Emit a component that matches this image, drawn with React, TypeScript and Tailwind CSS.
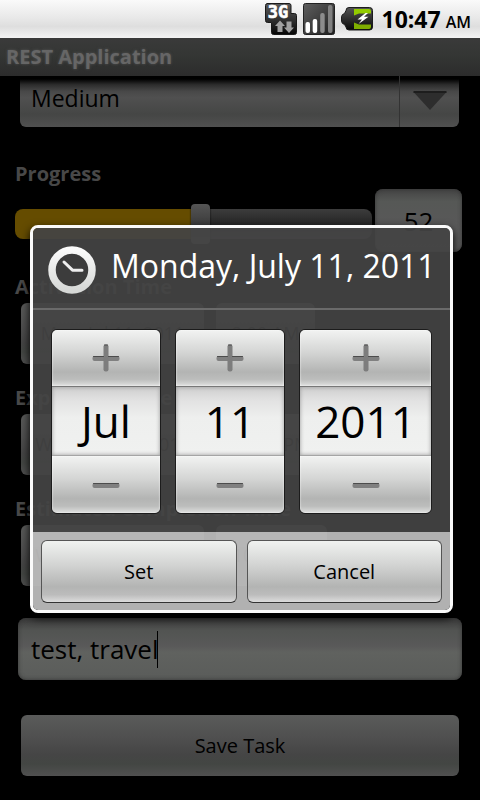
import React from "react";

const FONT = "font-['Open_Sans','Noto_Sans',sans-serif]";

function NetworkIcon() {
  return (
    <svg width="32" height="32" viewBox="0 0 32 32" role="img" aria-label="3G data">
      <defs>
        <linearGradient id="net" x1="0" y1="0" x2="0" y2="1">
          <stop offset="0" stopColor="#5a5a5a" />
          <stop offset="0.6" stopColor="#2a2a2a" />
          <stop offset="1" stopColor="#050505" />
        </linearGradient>
      </defs>
      <path
        d="M2 0.5H24a2 2 0 0 1 2 2V10.500h3.500a2 2 0 0 1 2 2V29.500a2 2 0 0 1 -2 2H8.500a2 2 0 0 1 -2 -2V19.500H2.500a2 2 0 0 1 -2 -2V2.500a2 2 0 0 1 2 -2z"
        fill="url(#net)"
        stroke="#1a1a1a"
      />
      <text x="13" y="15" textAnchor="middle" fontFamily="DejaVu Sans Mono, monospace" fontWeight="700" fontSize="17" fill="#fff" stroke="#fff" strokeWidth="0.6">
        3G
      </text>
      <path d="M15 17.500l5 5.500h-2.500v6h-5v-6H10z" fill="#a0a0a0" />
      <path d="M24 30l5-5.500h-2.500v-6h-5v6H19z" fill="#a0a0a0" />
    </svg>
  );
}

function SignalIcon() {
  return (
    <svg width="32" height="32" viewBox="0 0 32 32" role="img" aria-label="Signal strength">
      <defs>
        <linearGradient id="sig" x1="0" y1="0" x2="1" y2="1">
          <stop offset="0" stopColor="#5f5f5f" />
          <stop offset="0.5" stopColor="#3f3f3f" />
          <stop offset="1" stopColor="#1e1e1e" />
        </linearGradient>
      </defs>
      <rect x="0.5" y="0.5" width="31" height="31" rx="2" fill="url(#sig)" stroke="#222" />
      <rect x="2.500" y="19" width="4.500" height="11" rx="2" fill="#fff" />
      <rect x="9.700" y="16" width="4.500" height="14" rx="2" fill="#fff" />
      <rect x="17.200" y="10" width="4.500" height="20" rx="2" fill="#8c8c8c" />
      <rect x="25" y="2" width="4.500" height="28" rx="2" fill="#808080" />
    </svg>
  );
}

function BatteryIcon() {
  return (
    <svg width="32" height="24" viewBox="0 0 32 24" role="img" aria-label="Battery charging">
      <defs>
        <linearGradient id="bat" x1="0" y1="0" x2="0" y2="1">
          <stop offset="0" stopColor="#555" />
          <stop offset="1" stopColor="#080808" />
        </linearGradient>
      </defs>
      <path
        d="M8 0.5H28.500a3 3 0 0 1 3 3V20a3 3 0 0 1 -3 3H8a3 3 0 0 1 -3-3l-1.500-2.500a4 4 0 0 1 -3-3V9.500a4 4 0 0 1 3-3L5 3.500a3 3 0 0 1 3-3z"
        fill="url(#bat)"
        stroke="#1c1c1c"
      />
      <path d="M13 2h15a2 2 0 0 1 2 2v2.500H18l-5 2z" fill="#93cc00" />
      <path d="M13 22h15a2 2 0 0 0 2-2v-2.500H18l-5-2z" fill="#7fae00" />
      <path d="M24.500 6l-8 6.500h4.500l-3.500 4.500 10-7.300h-4.500l4-3.700z" fill="#fff" />
    </svg>
  );
}

function ClockIcon() {
  return (
    <svg width="48" height="48" viewBox="0 0 48 48" aria-hidden="true">
      <defs>
        <linearGradient id="ring" x1="0" y1="0" x2="0" y2="1">
          <stop offset="0" stopColor="#fafafa" />
          <stop offset="1" stopColor="#d6d8d6" />
        </linearGradient>
      </defs>
      <circle cx="24" cy="24" r="20" fill="#3c3c3c" stroke="url(#ring)" strokeWidth="7.500" />
      <path d="M16 16l8.500 8.200H34" fill="none" stroke="#eee" strokeWidth="3" strokeLinecap="round" strokeLinejoin="round" />
    </svg>
  );
}

function StepIcon({ plus }: { plus?: boolean }) {
  return (
    <svg width="28" height="28" viewBox="0 0 28 28" aria-hidden="true">
      <rect x="0.5" y="12" width="27" height="5" rx="2" fill="#808080" />
      {plus && <rect x="11.500" y="0.5" width="5" height="27" rx="2" fill="#7d7d7d" />}
      <path d={plus ? "M1.500 12.500H11.500M16.500 12.500H26.500M12.500 1H15.500" : "M1.500 12.500H26.500"} stroke="#4c4c4c" strokeLinecap="round" />
    </svg>
  );
}

const stepButton =
  "flex items-center justify-center bg-[linear-gradient(#f2f3f2,#d4d5d4_40%,#b3b4b3_75%,#bcbdbc_88%,#dfe0df)] shadow-[inset_0_0_2px_#fff]";

function Picker({ label, value, width }: { label: string; value: string; width: string }) {
  return (
    <div role="group" aria-label={label} className={`flex flex-col overflow-hidden rounded-md border border-[#1c1c1c] ${width}`}>
      <button type="button" aria-label={`Increase ${label}`} className={`h-14 ${stepButton}`}>
        <StepIcon plus />
      </button>
      <input
        aria-label={label}
        defaultValue={value}
        className="h-[70px] w-full border-y border-t-[#777] border-b-[#a5a5a5] bg-[linear-gradient(#cfcfcf,#e2e2e2_20%,#eeefee_45%,#f0f1f0)] text-center text-[44px] text-black shadow-[inset_0_0_4px_#999] outline-none"
      />
      <button type="button" aria-label={`Decrease ${label}`} className={`h-[57px] ${stepButton}`}>
        <StepIcon />
      </button>
    </div>
  );
}

const darkButton =
  "rounded-md bg-[linear-gradient(#5a5b5a,#505050_35%,#454545_65%,#434643_80%,#505050)] text-black";

function DateRow({ label, date, time, timeWidth }: { label: string; date: string; time: string; timeWidth: string }) {
  return (
    <section className="flex h-[111px] flex-col">
      <h2 className="px-[15px] pt-[9px] text-[20px] leading-[30px] font-bold text-[#484848]">{label}</h2>
      <div className="mt-[1px] flex gap-3 px-[21px]">
        <button type="button" className={`h-[61px] w-[183px] text-[18px] ${darkButton}`}>{date}</button>
        <button type="button" className={`h-[61px] text-[18px] ${timeWidth} ${darkButton}`}>{time}</button>
      </div>
    </section>
  );
}

const dialogButton =
  "h-[63px] rounded-md border border-[#555] border-b-[#333] bg-[linear-gradient(#f0f2f0,#d2d3d2_40%,#b3b4b3_75%,#bcbcbc_88%,#dcdcdc)] text-[20px] text-black";

export default function App() {
  return (
    <div className={`relative min-h-screen overflow-hidden bg-black ${FONT}`}>
      <header className="flex h-[38px] items-center justify-end bg-[linear-gradient(#fafafa,#e9e9e9_45%,#dedede_70%,#f4f4f4)] pr-[9px]">
        <div className="flex items-center gap-[6px]">
          <NetworkIcon />
          <SignalIcon />
          <BatteryIcon />
        </div>
        <time className="ml-[9px] flex items-baseline gap-[5px] text-black">
          <span className="text-[23px] font-bold">10:47</span>
          <span className="text-[16px] font-semibold">AM</span>
        </time>
      </header>

      <h1 className="h-[38px] bg-[linear-gradient(#3a3a3a,#343634_45%,#2c2c2c)] px-[6px] text-[20px] leading-[37px] font-bold text-[#666] [text-shadow:0_0_3px_#555]">
        REST Application
      </h1>

      <main>
        <div className="relative mx-5 mr-[21px]">
          <select
            aria-label="Priority"
            defaultValue="Medium"
            className="h-[51px] w-full appearance-none rounded-b-md bg-[linear-gradient(#000_6%,#2c2c2c_17%,#484848_30%,#505050_42%,#454645_75%,#505050)] pb-[6px] pl-[11px] text-[23px] text-black outline-none"
          >
            <option>Low</option>
            <option>Medium</option>
            <option>High</option>
          </select>
          <div className="pointer-events-none absolute inset-y-0 right-0 flex w-[60px] items-start justify-center border-l border-[#333] pt-[15px]">
            <svg width="34" height="20" viewBox="0 0 34 20" aria-hidden="true">
              <path d="M0.5 1h33L17 19z" fill="#2d2d2d" />
              <path d="M0.500 1h33" stroke="#1d1d1d" strokeWidth="2" />
            </svg>
          </div>
        </div>

        <label htmlFor="progress" className="mt-8 block px-[15px] text-[20px] leading-[30px] font-bold text-[#484848]">
          Progress
        </label>
        <div className="flex items-center gap-[3px] pr-[18px] pl-[15px]">
          <input
            id="progress"
            type="range"
            min={0}
            max={100}
            defaultValue={52}
            className="mt-[7px] h-[30px] min-w-0 flex-1 appearance-none rounded-lg bg-[linear-gradient(90deg,#654c00_52%,transparent_52%),linear-gradient(#3c3c3c,#262626_50%,#48434a)] [&::-webkit-slider-runnable-track]:h-[30px] [&::-webkit-slider-thumb]:-mt-[5px] [&::-webkit-slider-thumb]:h-10 [&::-webkit-slider-thumb]:w-[19px] [&::-webkit-slider-thumb]:appearance-none [&::-webkit-slider-thumb]:rounded-sm [&::-webkit-slider-thumb]:bg-[linear-gradient(#555,#3c3c3c_50%,#5c5c5c)] [&::-webkit-slider-thumb]:shadow-[0_0_2px_#000]"
          />
          <input
            aria-label="Progress value"
            defaultValue="52"
            className="h-[63px] w-[87px] rounded-lg bg-[linear-gradient(#444,#565856_20%,#585858_50%,#606060)] text-center text-[26px] text-black shadow-[inset_0_0_4px_#333] outline-none"
          />
        </div>

        <div className="mt-[11px]">
          <DateRow label="Activation Time" date="Mon, Jul 11, 2011" time="8:00 AM" timeWidth="w-[99px]" />
          <DateRow label="Expiration Time" date="Wed, Dec 14, 2011" time="12:00 PM" timeWidth="w-[111px]" />
          <DateRow label="Estimated Completion Time" date="Wed, Dec 14, 2011" time="10:00 PM" timeWidth="w-[111px]" />
        </div>

        <div className="mt-[22px] px-[18px]">
          <div className="flex h-[62px] items-center rounded-lg bg-[linear-gradient(#3a3a3a,#525452_20%,#595959_45%,#60625f_55%,#5a5c5a)] px-[13px] shadow-[inset_0_0_4px_#333]">
            <input
              aria-label="Tags"
              defaultValue="test, travel"
              className="h-[37px] w-[127px] border-r border-black bg-transparent text-[26px] text-black outline-none"
            />
          </div>
        </div>

        <div className="mt-[35px] px-[21px] pb-6">
          <button type="button" className={`h-[61px] w-full text-[20px] ${darkButton}`}>Save Task</button>
        </div>
      </main>

      <div className="absolute inset-x-0 top-[38px] bottom-0 flex items-center pr-[27px] pl-[30px]">
        <div
          role="dialog"
          aria-labelledby="dialog-title"
          className="w-full overflow-hidden rounded-lg border-[3px] border-[#fafafa] shadow-[0_4px_10px_#000]"
        >
          <div className="bg-[#444444]/93">
            <div className="flex h-[82px] items-center gap-[15px] border-b-2 border-[#6a6a6a] pt-1 pl-[15px]">
              <ClockIcon />
              <h2 id="dialog-title" className="pb-2 text-[32px] whitespace-nowrap text-white">Monday, July 11, 2011</h2>
            </div>
            <div className="flex justify-center gap-[14px] pt-[19px] pb-[18px]">
              <Picker label="Month" value="Jul" width="w-[110px]" />
              <Picker label="Day" value="11" width="w-[110px]" />
              <Picker label="Year" value="2011" width="w-[133px]" />
            </div>
          </div>
          <div className="grid grid-cols-2 gap-[10px] bg-[#bcbcbc]/94 px-2 pt-2 pb-[7px]">
            <button type="button" className={dialogButton}>Set</button>
            <button type="button" className={dialogButton}>Cancel</button>
          </div>
        </div>
      </div>
    </div>
  );
}
